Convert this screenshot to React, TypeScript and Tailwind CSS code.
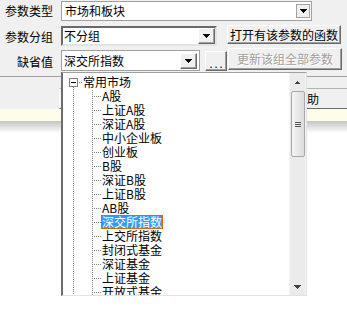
import React from "react";

const items = [
  "A股",
  "上证A股",
  "深证A股",
  "中小企业板",
  "创业板",
  "B股",
  "深证B股",
  "上证B股",
  "AB股",
  "深交所指数",
  "上交所指数",
  "封闭式基金",
  "深证基金",
  "上证基金",
  "开放式基金",
];

function Tri({ up }: { up?: boolean }) {
  return (
    <svg width="7" height="4" viewBox="0 0 7 4" shapeRendering="crispEdges">
      <polygon points={up ? "0,4 7,4 3.5,0" : "0,0 7,0 3.5,4"} fill="#000" />
    </svg>
  );
}

function DropBtn({ flat }: { flat?: boolean }) {
  return flat ? (
    <div className="w-[14px] h-[14px] mr-[1px] flex items-center justify-center bg-[#f0f0f0] border border-[#a0a0a0]">
      <Tri />
    </div>
  ) : (
    <div className="w-[17px] h-[16px] flex items-center justify-center bg-[#f0f0f0] border border-t-white border-l-white border-r-[#696969] border-b-[#696969] shadow-[inset_-1px_-1px_0_#a0a0a0]">
      <Tri />
    </div>
  );
}

function TreeLines() {
  const rows = Array.from({ length: 15 }, (_, i) => 9.5 + 14 * (i + 1));
  return (
    <svg className="absolute left-0 top-0" width="226" height="223" shapeRendering="crispEdges">
      <line x1="10.5" y1="14" x2="10.5" y2="223" stroke="#808080" strokeDasharray="1 1" />
      <line x1="29.5" y1="17" x2="29.5" y2="223" stroke="#808080" strokeDasharray="1 1" />
      <line x1="16" y1="9.5" x2="20" y2="9.5" stroke="#808080" strokeDasharray="1 1" />
      {rows.map((y) => (
        <line key={y} x1="31" y1={y} x2="38" y2={y} stroke="#808080" strokeDasharray="1 1" />
      ))}
      <rect x="6.5" y="5.5" width="8" height="8" fill="#fff" stroke="#808080" />
      <line x1="8" y1="9.5" x2="13" y2="9.5" stroke="#000" />
    </svg>
  );
}

export default function App() {
  return (
    <div className="relative w-[347px] h-[312px] overflow-hidden bg-white text-[12px] text-black font-['Noto_Sans_CJK_SC','Liberation_Sans',sans-serif]">
      {/* form */}
      <div className="h-[76px] bg-[#f0f0f0] flex flex-col">
        <div className="mt-[1px] h-[20px] flex items-center">
          <div className="w-[53px] text-right leading-[14px]">参数类型</div>
          <div className="ml-[8px] w-[251px] h-[20px] flex items-center bg-white border border-[#a0a0a0]">
            <span className="flex-1 pl-[3px] leading-[14px]">市场和板块</span>
            <DropBtn flat />
          </div>
        </div>
        <div className="mt-[4px] h-[21px] flex items-start">
          <div className="w-[53px] mt-[5px] text-right leading-[14px]">参数分组</div>
          <div className="ml-[8px] mt-[1px] w-[156px] h-[20px] flex items-center bg-white border-2 border-t-[#696969] border-l-[#696969] border-r-[#e3e3e3] border-b-[#e3e3e3]">
            <span className="flex-1 pl-[1px] leading-[14px]">不分组</span>
            <DropBtn />
          </div>
          <div className="ml-[10px] w-[114px] h-[19px] flex items-center justify-center leading-[14px] bg-[#f0f0f0] border border-t-white border-l-white border-r-[#696969] border-b-[#696969] shadow-[inset_-1px_-1px_0_#a0a0a0]">
            打开有该参数的函数
          </div>
        </div>
        <div className="mt-[2px] h-[23px] flex items-start">
          <div className="w-[53px] mt-[7px] text-right leading-[14px]">缺省值</div>
          <div className="ml-[8px] mt-[2px] w-[139px] h-[21px] flex items-center bg-white border border-[#a0a0a0]">
            <span className="flex-1 pl-[2px] leading-[14px]">深交所指数</span>
            <div className="mr-[2px]">
              <DropBtn />
            </div>
          </div>
          <div className="ml-[5px] mt-[3px] w-[22px] h-[20px] flex items-end justify-center pb-[3px] bg-[#f0f0f0] border border-t-white border-l-white border-r-[#696969] border-b-[#696969] shadow-[inset_-1px_-1px_0_#a0a0a0]">
            <span className="text-[11px] leading-[8px] tracking-[2px] pl-[2px]">...</span>
          </div>
          <div className="ml-[1px] w-[114px] h-[22px] flex items-center justify-center leading-[14px] text-[#a0a0a0] [text-shadow:1px_1px_0_#fff] bg-[#f0f0f0] border border-t-white border-l-white border-r-[#696969] border-b-[#696969] shadow-[inset_-1px_-1px_0_#a0a0a0]">
            更新该组全部参数
          </div>
        </div>
      </div>

      {/* panel behind the popup */}
      <div className="h-[1px] bg-[#a0a0a0]" />
      <div className="h-[32px] bg-[#f0f0f0] pt-[11px]">
        <div className="ml-[59px] h-[21px] flex items-center justify-end pr-[28px] leading-[14px] border-l border-l-white border-t border-t-[#b4b4b4] border-b border-b-[#696969]">
          帮助
        </div>
      </div>
      <div className="h-[12px] bg-[#fdfdea]" />
      <div className="h-[12px] bg-gradient-to-b from-[#c4c4c4] to-white" />

      {/* dropdown popup */}
      <div className="absolute left-[61px] top-[72px] w-[246px] h-[224px] bg-white border-l-2 border-l-[#6d6d6d] border-t border-t-[#a0a0a0] border-r border-r-[#e3e3e3] border-b border-b-[#e3e3e3]">
        <div className="relative w-[226px] h-[222px] overflow-hidden">
          <TreeLines />
          <div className="relative pt-[2px]">
            <div className="h-[14px] flex items-center pl-[20px] leading-[14px]">常用市场</div>
            {items.map((t) => (
              <div key={t} className="h-[14px] flex items-center pl-[38px]">
                <span
                  className={
                    t === "深交所指数"
                      ? "px-[1px] h-[14px] leading-[14px] bg-[#3399ff] text-white outline outline-1 outline-dotted outline-[#cc6600] -outline-offset-1"
                      : "px-[1px] h-[14px] leading-[14px]"
                  }
                >
                  {t}
                </span>
              </div>
            ))}
          </div>
        </div>
        {/* scrollbar */}
        <div className="absolute right-0 top-0 w-[17px] h-[222px] bg-[#ebebeb] border-x border-[#f4f4f4] flex flex-col items-center">
          <div className="h-[18px] flex items-center justify-center">
            <svg width="5" height="3" viewBox="0 0 5 3" shapeRendering="crispEdges">
              <polygon points="0,3 5,3 2.5,0" fill="#404040" />
            </svg>
          </div>
          <div className="w-[14px] h-[66px] rounded-[2px] border border-[#a8a8a8] bg-gradient-to-r from-[#f4f4f4] to-[#dcdcdc] flex flex-col items-center justify-center gap-[1px]">
            <div className="w-[6px] h-[1px] bg-[#555]" />
            <div className="w-[6px] h-[1px] bg-[#555]" />
            <div className="w-[6px] h-[1px] bg-[#555]" />
          </div>
          <div className="flex-1" />
          <div className="h-[16px] flex items-center justify-center">
            <svg width="7" height="4" viewBox="0 0 7 4" shapeRendering="crispEdges">
              <polygon points="0,0 7,0 3.5,4" fill="#404040" />
            </svg>
          </div>
        </div>
      </div>
    </div>
  );
}
